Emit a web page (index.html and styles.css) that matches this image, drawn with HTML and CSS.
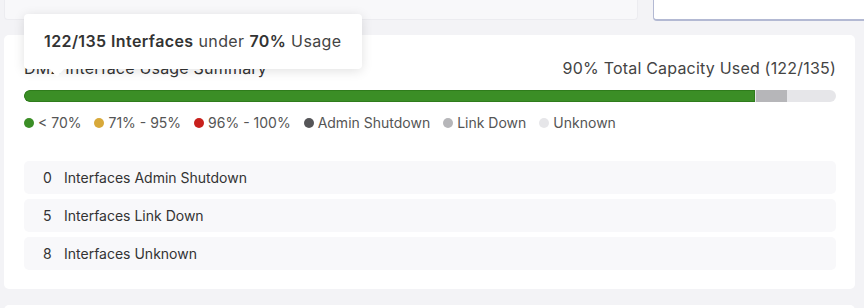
FILE: index.html
```html
<!DOCTYPE html>
<html lang="en">
<head>
  <meta charset="UTF-8" />
  <meta name="viewport" content="width=device-width, initial-scale=1" />
  <title>Interface Usage Summary</title>
  <link rel="stylesheet" href="styles.css">
</head>
<body>
  <div class="top-row">
    <div class="top-card"></div>
    <div class="top-input"></div>
  </div>

  <section class="card">
    <div class="card-header">
      <h2 class="card-title">DMZ Interface Usage Summary</h2>
      <span class="capacity">90% Total Capacity Used (122/135)</span>
    </div>

    <div class="bar">
      <div class="bar-seg seg-ok" style="width: 90%"></div>
      <div class="bar-seg seg-down" style="width: 3.9%"></div>
    </div>

    <ul class="legend">
      <li><span class="dot dot-ok"></span>&lt; 70%</li>
      <li><span class="dot dot-warn"></span>71% - 95%</li>
      <li><span class="dot dot-crit"></span>96% - 100%</li>
      <li><span class="dot dot-admin"></span>Admin Shutdown</li>
      <li><span class="dot dot-down"></span>Link Down</li>
      <li><span class="dot dot-unknown"></span>Unknown</li>
    </ul>

    <div class="rows">
      <div class="row"><span class="row-num">0</span>Interfaces Admin Shutdown</div>
      <div class="row"><span class="row-num">5</span>Interfaces Link Down</div>
      <div class="row"><span class="row-num">8</span>Interfaces Unknown</div>
    </div>

    <!-- Tooltip over the bar -->
    <div class="tooltip"><b>122/135 Interfaces</b> under <b>70%</b> Usage</div>
  </section>

  <section class="card next-card"></section>
</body>
</html>
```

FILE: styles.css
```css
body {
  margin: 0;
  padding: 0 9px 0 4px;
  font-family: Inter, 'Liberation Sans', sans-serif;
  background: #f3f3f6;
  color: #333;
  overflow: hidden;
}

/* Fila de arriba (cortada) */
.top-row {
  display: flex;
  gap: 15px;
  height: 21px;
  margin-right: -20px;
}

.top-card {
  width: 634px;
  height: 20px;
  background: #f8f8fa;
  border: 1px solid #ececf0;
  border-top: none;
  border-radius: 0 0 4px 4px;
  box-sizing: border-box;
}

.top-input {
  flex: 1;
  height: 21px;
  background: white;
  border-left: 1px solid #b3b9d3;
  border-bottom: 2px solid #b3b9d3;
  border-radius: 0 0 0 4px;
  box-sizing: border-box;
}

/* Tarjeta */
.card {
  position: relative;
  margin-top: 14px;
  background: white;
  border-radius: 5px;
  padding: 21px 19px 19px 20px;
}

.next-card {
  margin-top: 16px;
  height: 40px;
  padding: 0;
}

.card-header {
  display: flex;
  justify-content: space-between;
  align-items: center;
  height: 24px;
}

.card-title {
  margin: 0;
  font-size: 16px;
  font-weight: 400;
  letter-spacing: 0.2px;
  color: #333;
}

.capacity {
  font-size: 16px;
  letter-spacing: 0.2px;
  color: #444;
}

/* Barra */
.bar {
  display: flex;
  height: 12px;
  margin-top: 10px;
  background: #e6e6e9;
  border-radius: 6px;
  overflow: hidden;
}

.seg-ok {
  background: #3b8e26;
  box-shadow: inset 0 0 0 1px #2f7c1c;
  border-radius: 6px 0 0 6px;
}

.seg-down {
  background: #b6b6b9;
  margin-left: 1px;
}

/* Leyenda */
.legend {
  display: flex;
  gap: 13px;
  list-style: none;
  margin: 12px 0 0;
  padding: 0;
  font-size: 14px;
  color: #555;
}

.legend li {
  display: flex;
  align-items: center;
  gap: 4px;
}

.dot {
  width: 10px;
  height: 10px;
  border-radius: 50%;
}

.dot-ok { background: #3b8e26; }
.dot-warn { background: #d8a93a; }
.dot-crit { background: #c8201c; }
.dot-admin { background: #555558; }
.dot-down { background: #b6b6b9; }
.dot-unknown { background: #e6e6e9; }

/* Filas */
.rows {
  display: flex;
  flex-direction: column;
  gap: 5px;
  margin-top: 30px;
}

.row {
  display: flex;
  align-items: center;
  height: 33px;
  padding-left: 19px;
  background: #f8f8fa;
  border-radius: 5px;
  font-size: 14px;
  color: #333;
}

.row-num {
  width: 21px;
}

/* Tooltip */
.tooltip {
  position: absolute;
  left: 20px;
  top: -21px;
  width: 338px;
  height: 55px;
  box-sizing: border-box;
  padding-left: 20px;
  line-height: 55px;
  background: white;
  border-radius: 4px;
  box-shadow: 0 2px 12px rgba(0, 0, 0, 0.12);
  font-size: 16px;
  letter-spacing: 0.4px;
  color: #444;
}

.tooltip b {
  font-weight: 600;
  color: #333;
}

.tooltip::after {
  content: '';
  position: absolute;
  left: 26px;
  bottom: -8px;
  border-left: 7px solid transparent;
  border-right: 7px solid transparent;
  border-top: 8px solid white;
}
```
